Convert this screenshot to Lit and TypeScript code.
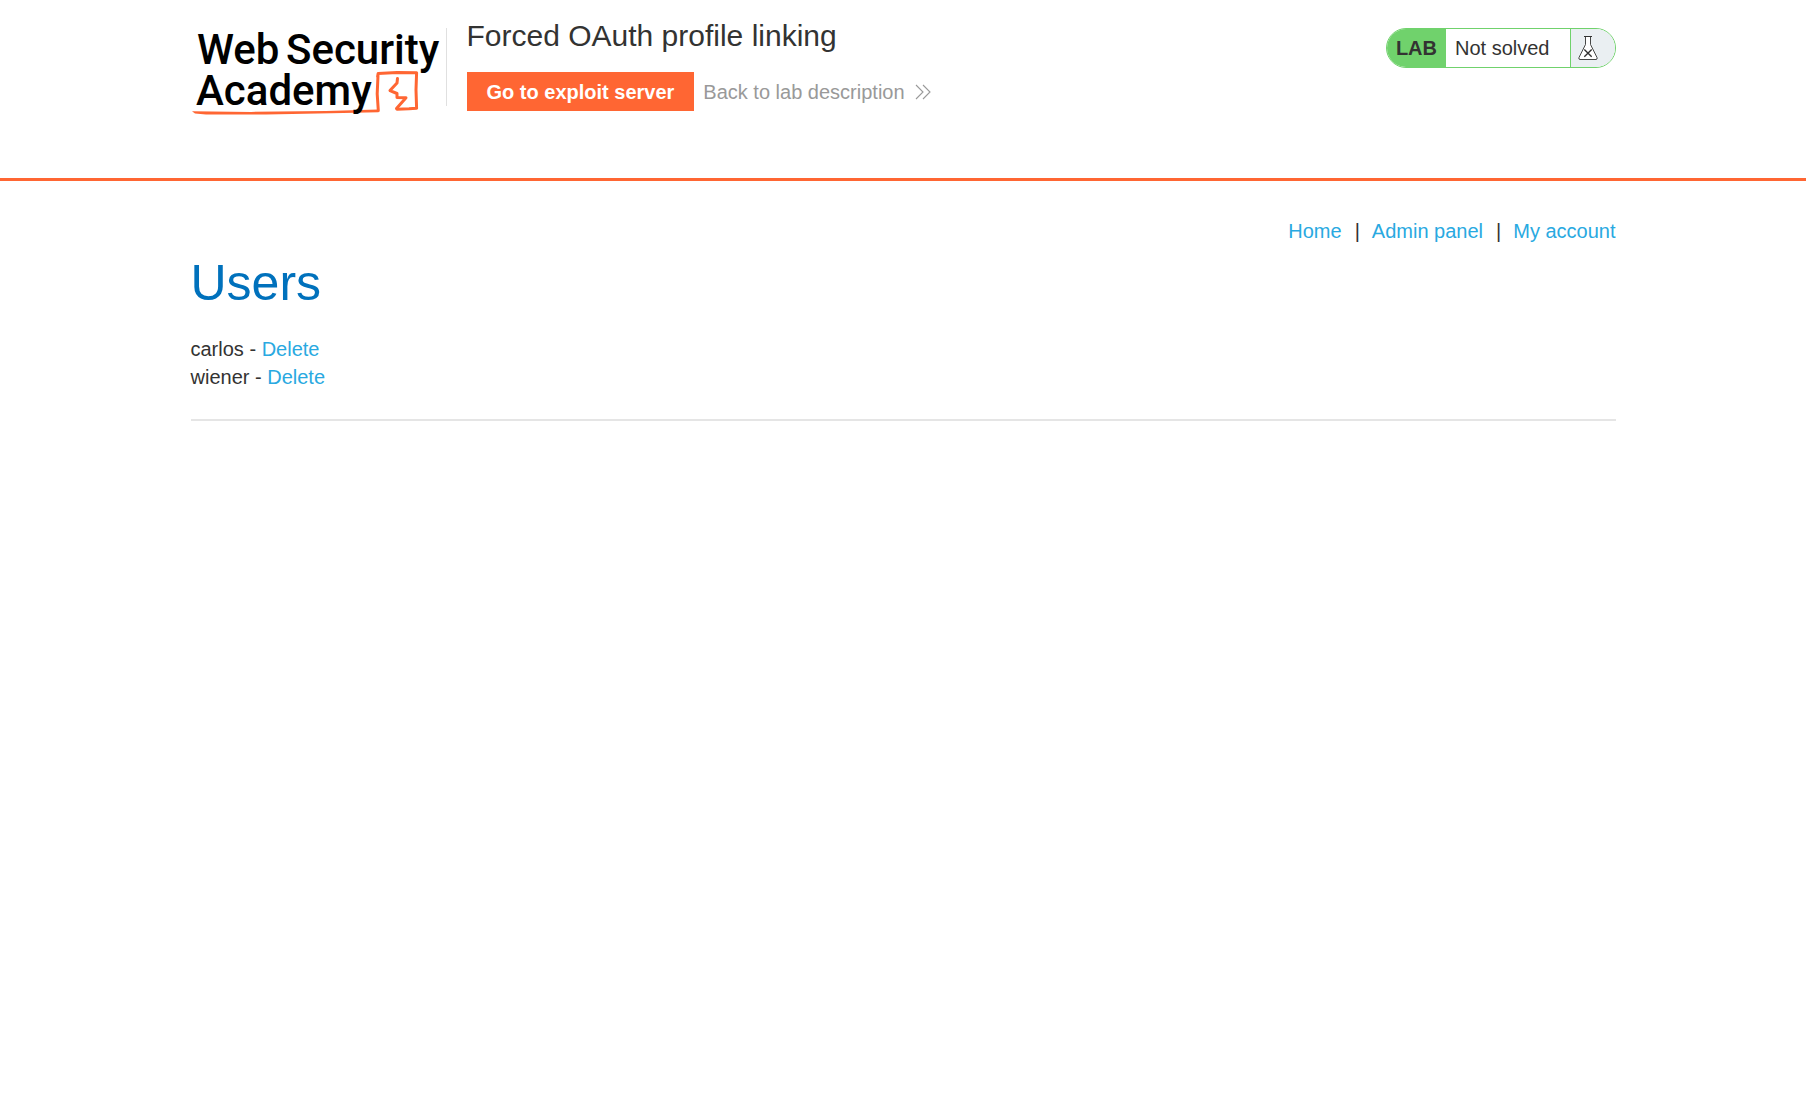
import { LitElement, html, css } from "lit";
import { customElement } from "lit/decorators.js";

interface User {
  name: string;
}

@customElement("academy-logo")
class AcademyLogo extends LitElement {
  static styles = css`
    :host { display: block; }
    .logo { display: block; width: 250px; height: 92px; overflow: visible; }
    .word {
      font-family: Roboto, "Liberation Sans", sans-serif;
      font-size: 42px;
      font-weight: 500;
      fill: #000;
    }
    .mark { fill: none; stroke: #ff6633; stroke-width: 3; stroke-linejoin: round; stroke-linecap: round; }
    .brush { fill: #ff6633; }
  `;
  render() {
    return html`
      <svg class="logo" viewBox="0 0 250 92" role="img" aria-label="Web Security Academy">
        <path class="brush" d="M1 87.2 L60 87.9 L135 87 L187 85.4 L187.6 88.2 L140 89.2 L75 90.4 L15 90.4 L4 89.4Z" />
        <path class="mark" d="M187.3 86.5 L186.2 70 L187 51.5 M186.6 52.5 L187.2 49.4 L206 48.6 L225.6 48.8 L225 66 L225.6 84.2 L218 84.8 L206 85.2" />
        <path class="mark" d="M206.5 54.5 L206 59 L199 66.6 L206 69.5 L206 73.4 L215 73.8 L205.5 84.4" />
        <text class="word" x="6" y="40">Web</text>
        <text class="word" x="95" y="40">Security</text>
        <text class="word" x="5" y="81">Academy</text>
      </svg>
    `;
  }
}

@customElement("lab-status")
class LabStatus extends LitElement {
  static styles = css`
    :host { display: block; }
    .status {
      display: flex;
      box-sizing: border-box;
      height: 40px;
      border: 1px solid #70d26c;
      border-radius: 20px;
      overflow: hidden;
      background: #fff;
      color: #333332;
      line-height: 38px;
    }
    .label { padding: 0 9px; background: #70d26c; font-weight: 700; }
    .text { padding: 0 20px 0 9px; }
    .icon {
      display: flex;
      align-items: center;
      width: 37px;
      padding-left: 7px;
      border-left: 1px solid #70d26c;
      background: #eaeff2;
    }
    .flask { display: block; width: 20px; height: 26px; }
  `;
  render() {
    return html`
      <div class="status">
        <span class="label">LAB</span>
        <span class="text">Not solved</span>
        <span class="icon">
          <svg class="flask" viewBox="0 0 20 26" fill="none" stroke="#333332" aria-hidden="true">
            <path d="M7.5 2 V9.5 L1 22.5 Q0.4 24.5 2 24.5 H18 Q19.6 24.5 19 22.5 L12.5 9.5 V2" fill="#fff" stroke-width="0.9" />
            <path d="M6 1.5 H14" stroke-width="1.2" />
            <path d="M6.3 14.5 L13.7 21.7 M13.7 14.5 L6.3 21.7" stroke-width="1.4" />
          </svg>
        </span>
      </div>
    `;
  }
}

@customElement("app-root")
class AppRoot extends LitElement {
  static styles = css`
    :host {
      display: block;
      background: #fff;
      color: #333332;
      font-family: "Liberation Sans", Arial, sans-serif;
      font-size: 20px;
      line-height: 28px;
    }
    a { color: #29a9e1; text-decoration: none; }
    .container { max-width: 1425px; margin: 0 auto; }
    .banner { border-bottom: 3px solid #ff6633; }
    .banner-row {
      display: flex;
      align-items: flex-start;
      box-sizing: border-box;
      min-height: 178px;
      padding-top: 16px;
    }
    .logo-link { padding-top: 8px; }
    .titles {
      display: flex;
      flex-direction: column;
      flex: 1;
      align-items: flex-start;
      gap: 16px;
    }
    .logo-cell { display: flex; padding-right: 20px; }
    .divider { width: 1px; height: 78px; margin: 12px 0 0 5px; background: #e0e0e0; }
    .title { margin: 0; font-size: 30px; font-weight: 400; line-height: 40px; }
    .actions { display: flex; align-items: center; gap: 9px; }
    .exploit {
      padding: 6px 20px 5px;
      border: 0;
      background: #ff6633;
      color: #fff;
      font: inherit;
      font-weight: 700;
      cursor: pointer;
    }
    .back { display: flex; align-items: center; gap: 10px; color: #999; }
    .chevrons { width: 16px; height: 16px; }
    .status-cell { padding-top: 12px; }
    .page { padding-top: 36px; }
    .nav { display: flex; justify-content: flex-end; gap: 12px; }
    .bar { padding-left: 1px; }
    .heading { margin: 0; color: #0071bc; font-size: 50px; font-weight: 400; line-height: 56px; padding-top: 10px; }
    .users { margin: 24px 0 0; padding: 0; list-style: none; }
    .rule { height: 2px; margin: 28px 0 0; border: 0; background: #e5e5e5; }
  `;

  private users: User[] = [{ name: "carlos" }, { name: "wiener" }];

  render() {
    return html`
      <header class="banner">
        <div class="container banner-row">
          <div class="logo-cell">
            <a class="logo-link" href="#"><academy-logo></academy-logo></a>
            <span class="divider"></span>
          </div>
          <div class="titles">
            <h2 class="title">Forced OAuth profile linking</h2>
            <div class="actions">
              <button class="exploit" type="button">Go to exploit server</button>
              <a class="back" href="#">
                Back to lab description
                <svg class="chevrons" viewBox="0 0 16 16" fill="none" stroke="#999" stroke-width="1.1" aria-hidden="true">
                  <path d="M1 1 L8 8 L1 15 M8 1 L15 8 L8 15" />
                </svg>
              </a>
            </div>
          </div>
          <div class="status-cell"><lab-status></lab-status></div>
        </div>
      </header>
      <main class="container page">
        <nav class="nav">
          <a href="#">Home</a><span class="bar">|</span>
          <a href="#">Admin panel</a><span class="bar">|</span>
          <a href="#">My account</a>
        </nav>
        <h1 class="heading">Users</h1>
        <ul class="users">
          ${this.users.map((u) => html`<li>${u.name} - <a href="#">Delete</a></li>`)}
        </ul>
        <hr class="rule" />
      </main>
    `;
  }
}
